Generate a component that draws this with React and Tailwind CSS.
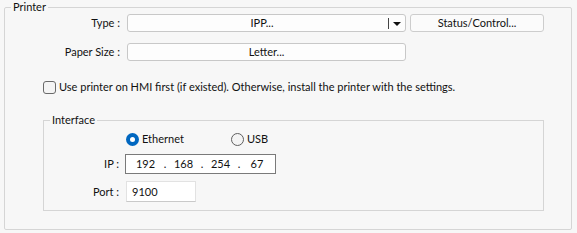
import React from "react";

const font = { fontFamily: 'Lato, "Noto Sans", sans-serif' };

function Radio({ checked, label }) {
  return (
    <div className="flex items-center">
      {checked ? (
        <span className="w-[13px] h-[13px] rounded-full bg-[#0067c0] flex items-center justify-center">
          <span className="w-[5px] h-[5px] rounded-full bg-white" />
        </span>
      ) : (
        <span className="w-[13px] h-[13px] rounded-full border border-[#5f5f5f] bg-[#f4f4f4]" />
      )}
      <span className="ml-[3px]">{label}</span>
    </div>
  );
}

export default function App() {
  return (
    <div
      className="w-[577px] h-[233px] bg-[#f7f7f7] text-[11px] leading-[14px] text-[#111] pl-[4px]"
      style={font}
    >
      <fieldset className="w-[568px] h-[230px] border border-[#d5d5d5] rounded-[2px]">
        <legend className="ml-[6px] px-[2px]">Printer</legend>

        {/* Type */}
        <div className="flex items-center">
          <div className="w-[115px] text-right">Type :</div>
          <div className="ml-[7px] w-[279px] h-[18px] flex items-center border border-[#c8c8c8] rounded-[3px] bg-[#fdfdfd]">
            <div className="flex-1 text-center pl-[8px]">IPP...</div>
            <div className="w-px h-[11px] bg-[#444]" />
            <svg width="16" height="18" viewBox="0 0 16 18" className="shrink-0">
              <path d="M4 8 L12 8 L8 12 Z" fill="#111" />
            </svg>
          </div>
          <div className="ml-[4px] w-[134px] h-[18px] flex items-center justify-center border border-[#cdcdcd] rounded-[3px] bg-[#fbfbfb]">
            Status/Control...
          </div>
        </div>

        {/* Paper size */}
        <div className="flex items-center mt-[11px]">
          <div className="w-[115px] text-right">Paper Size :</div>
          <div className="ml-[7px] w-[279px] h-[18px] flex items-center justify-center border border-[#c8c8c8] rounded-[3px] bg-[#fdfdfd]">
            Letter...
          </div>
        </div>

        {/* Checkbox */}
        <div className="flex items-center mt-[19px] ml-[38px]">
          <span className="w-[13px] h-[13px] rounded-[3px] border border-[#6a6a6a] bg-[#f4f4f4]" />
          <span className="ml-[3px]">
            Use printer on HMI first (if existed). Otherwise, install the printer with the settings.
          </span>
        </div>

        {/* Interface */}
        <fieldset className="mt-[19px] ml-[38px] w-[501px] h-[98px] border border-[#d5d5d5]">
          <legend className="ml-[6px] px-[2px]">Interface</legend>

          <div className="flex items-center mt-[5px] ml-[82px]">
            <div className="w-[105px]">
              <Radio checked label="Ethernet" />
            </div>
            <Radio label="USB" />
          </div>

          <div className="flex items-center mt-[8px]">
            <div className="w-[75px] text-right">IP :</div>
            <div className="ml-[6px] w-[151px] h-[20px] border border-[#7a7a7a] bg-white flex items-center">
              <span className="w-[39px] text-center">192</span>
              <span className="w-0 flex justify-center">.</span>
              <span className="w-[37px] text-center">168</span>
              <span className="w-0 flex justify-center">.</span>
              <span className="w-[37px] text-center">254</span>
              <span className="w-0 flex justify-center">.</span>
              <span className="w-[36px] text-center">67</span>
            </div>
          </div>

          <div className="flex items-center mt-[7px]">
            <div className="w-[75px] text-right">Port :</div>
            <div className="ml-[7px] w-[70px] h-[21px] border border-[#e2e2e2] border-b-[#c9c9c9] bg-white flex items-center pl-[5px]">
              9100
            </div>
          </div>
        </fieldset>
      </fieldset>
    </div>
  );
}
